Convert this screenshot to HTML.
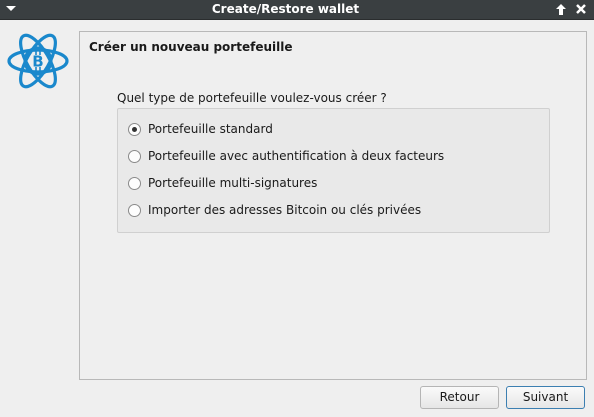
<!DOCTYPE html>
<html><head><meta charset="utf-8"><style>
body{margin:0;width:594px;height:417px;background:#efefef;font-family:"DejaVu Sans","Liberation Sans",sans-serif;font-size:12px;color:#1a1a1a;position:relative;overflow:hidden}
.tb{position:absolute;left:0;top:0;width:594px;height:19px;background:#3a3f41;border-bottom:1px solid #2a2d2e;color:#fff;font-weight:bold;font-size:12px;line-height:19px}
.tt{position:absolute;left:0;width:571px;text-align:center;top:0}
.panel{position:absolute;left:79px;top:31px;width:506px;height:347px;border:1px solid #b8b8b8;background:#efefef}
.h{position:absolute;left:89px;top:40px;font-weight:bold;font-size:12px}
.q{position:absolute;left:117px;top:91px}
.gb{position:absolute;left:117px;top:108px;width:431px;height:123px;border:1px solid #d0d0d0;border-radius:2px;background:#e9e9e9}
.r{position:absolute;left:148px;font-size:12px}
.rd{position:absolute;left:128px;width:13px;height:13px;border:1px solid #8a8a8a;border-radius:50%;background:#fdfdfd;box-sizing:border-box}
.btn{position:absolute;top:386px;width:79px;height:23px;box-sizing:border-box;border:1px solid #b5b5b5;border-radius:3px;background:linear-gradient(#fafafa,#e6e6e6);text-align:center;line-height:21px;font-size:12px}
</style></head><body>
<div class="tb"><div class="tt">Create/Restore wallet</div>
<svg style="position:absolute;left:6px;top:6px" width="10" height="6"><path d="M0 0H10L5 5Z" fill="#fff"/></svg>
<svg style="position:absolute;left:556px;top:4px" width="10" height="11"><path d="M5 0L10 5H7V11H3V5H0Z" fill="#fff"/></svg>
<svg style="position:absolute;left:576px;top:4px" width="10" height="10"><path d="M1 1L9 9M9 1L1 9" stroke="#fff" stroke-width="2.5"/></svg>
</div>
<svg style="position:absolute;left:6px;top:30px" width="64" height="62" viewBox="-32 -31 64 62">
<g fill="none" stroke="#1a88cc" stroke-width="3.2">
<ellipse rx="29" ry="11"/>
<ellipse rx="29" ry="11" transform="rotate(60)"/>
<ellipse rx="29" ry="11" transform="rotate(-60)"/>
<circle r="13"/>
</g>
<path d="M-2 -10V-6M2 -10V-6M-2 6V10M2 6V10" stroke="#1a88cc" stroke-width="1.6"/>
<text x="0" y="5.5" text-anchor="middle" font-size="15" font-weight="bold" fill="#1a88cc" font-family="DejaVu Sans,sans-serif">B</text>
</svg>
<div class="panel"></div>
<div class="h">Créer un nouveau portefeuille</div>
<div class="q">Quel type de portefeuille voulez-vous créer ?</div>
<div class="gb"></div>
<div class="rd" style="top:123px"><div style="position:absolute;left:3px;top:3px;width:5px;height:5px;border-radius:50%;background:#333"></div></div>
<div class="r" style="top:122px">Portefeuille standard</div>
<div class="rd" style="top:150px"></div>
<div class="r" style="top:149px">Portefeuille avec authentification à deux facteurs</div>
<div class="rd" style="top:177px"></div>
<div class="r" style="top:176px">Portefeuille multi-signatures</div>
<div class="rd" style="top:204px"></div>
<div class="r" style="top:203px">Importer des adresses Bitcoin ou clés privées</div>
<div class="btn" style="left:420px">Retour</div>
<div class="btn" style="left:506px;border-color:#3c7fb1">Suivant</div>
</body></html>
